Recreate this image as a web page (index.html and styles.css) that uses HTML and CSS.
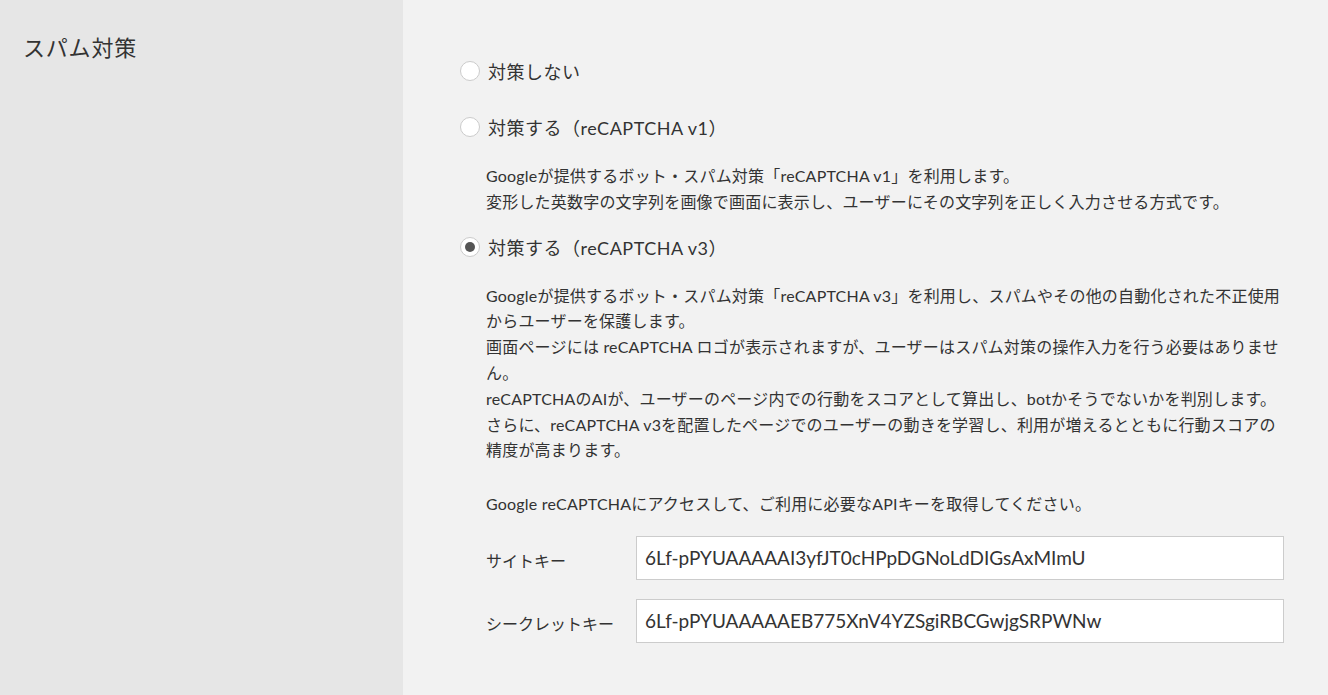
FILE: index.html
```html
<!DOCTYPE html>
<html lang="ja">
<head>
  <meta charset="UTF-8">
  <meta name="viewport" content="width=device-width, initial-scale=1.0">
  <title>スパム対策</title>
  <link rel="stylesheet" href="styles.css">
</head>
<body>
  <div class="page">
    <aside class="side">
      <h2 class="side-title">スパム対策</h2>
    </aside>

    <main class="main">
      <div class="option">
        <label class="radio-row">
          <span class="radio"></span>
          <span class="radio-label">対策しない</span>
        </label>
      </div>

      <div class="option">
        <label class="radio-row">
          <span class="radio"></span>
          <span class="radio-label">対策する（reCAPTCHA v1）</span>
        </label>
        <div class="desc">
          <p>Googleが提供するボット・スパム対策「reCAPTCHA v1」を利用します。<br>
          変形した英数字の文字列を画像で画面に表示し、ユーザーにその文字列を正しく入力させる方式です。</p>
        </div>
      </div>

      <div class="option">
        <label class="radio-row">
          <span class="radio checked"></span>
          <span class="radio-label">対策する（reCAPTCHA v3）</span>
        </label>
        <div class="desc">
          <p>Googleが提供するボット・スパム対策「reCAPTCHA v3」を利用し、スパムやその他の自動化された不正使用からユーザーを保護します。<br>
          画面ページには reCAPTCHA ロゴが表示されますが、ユーザーはスパム対策の操作入力を行う必要はありません。<br>
          reCAPTCHAのAIが、ユーザーのページ内での行動をスコアとして算出し、botかそうでないかを判別します。<br>
          さらに、reCAPTCHA v3を配置したページでのユーザーの動きを学習し、利用が増えるとともに行動スコアの精度が高まります。</p>
          <p class="notice">Google reCAPTCHAにアクセスして、ご利用に必要なAPIキーを取得してください。</p>

          <div class="field">
            <span class="field-label">サイトキー</span>
            <input class="field-input" type="text" value="6Lf-pPYUAAAAAI3yfJT0cHPpDGNoLdDIGsAxMImU">
          </div>
          <div class="field">
            <span class="field-label">シークレットキー</span>
            <input class="field-input" type="text" value="6Lf-pPYUAAAAAEB775XnV4YZSgiRBCGwjgSRPWNw">
          </div>
        </div>
      </div>
    </main>
  </div>
</body>
</html>
```

FILE: styles.css
```css
body {
  margin: 0;
  padding: 0;
  font-family: Lato, "Noto Sans CJK JP", sans-serif;
  color: #333;
  background-color: #f2f2f2;
}

.page {
  display: flex;
  min-height: 695px;
}

.side {
  width: 403px;
  flex-shrink: 0;
  background: #e6e6e6;
  padding: 30px 0 0 23px;
  box-sizing: border-box;
}

.side-title {
  margin: 0;
  font-size: 22px;
  font-weight: normal;
  line-height: 36px;
  letter-spacing: 0.8px;
}

.main {
  flex: 1;
  padding: 56px 44px 40px 57px;
}

.option + .option {
  margin-top: 17px;
}

/* la primera opción no tiene descripción */
.option:first-child {
  padding-bottom: 9px;
}

.radio-row {
  display: flex;
  align-items: center;
  gap: 8px;
  height: 30px;
  cursor: pointer;
}

.radio {
  width: 20px;
  height: 20px;
  border: 1px solid #cbcbcb;
  border-radius: 50%;
  background: #fff;
  box-sizing: border-box;
  display: flex;
  align-items: center;
  justify-content: center;
}

.radio.checked::after {
  content: "";
  width: 10px;
  height: 10px;
  border-radius: 50%;
  background: #555;
}

.radio-label {
  font-size: 18px;
  letter-spacing: 0.5px;
}

.desc {
  margin-top: 21px;
  padding-left: 26px;
  font-size: 16px;
  line-height: 25.8px;
}

.desc p {
  margin: 0;
  letter-spacing: 0.2px;
}

.desc .notice {
  margin-top: 28px;
}

.field {
  display: flex;
  align-items: center;
  margin-top: 19px;
}

.field-label {
  width: 150px;
  flex-shrink: 0;
  padding-top: 6px;
}

.field-input {
  flex: 1;
  height: 44px;
  box-sizing: border-box;
  border: 1px solid #ccc;
  background: #fff;
  padding: 0 8px;
  font-family: Lato, "Noto Sans CJK JP", sans-serif;
  font-size: 19px;
  color: #333;
  outline: none;
}
```
